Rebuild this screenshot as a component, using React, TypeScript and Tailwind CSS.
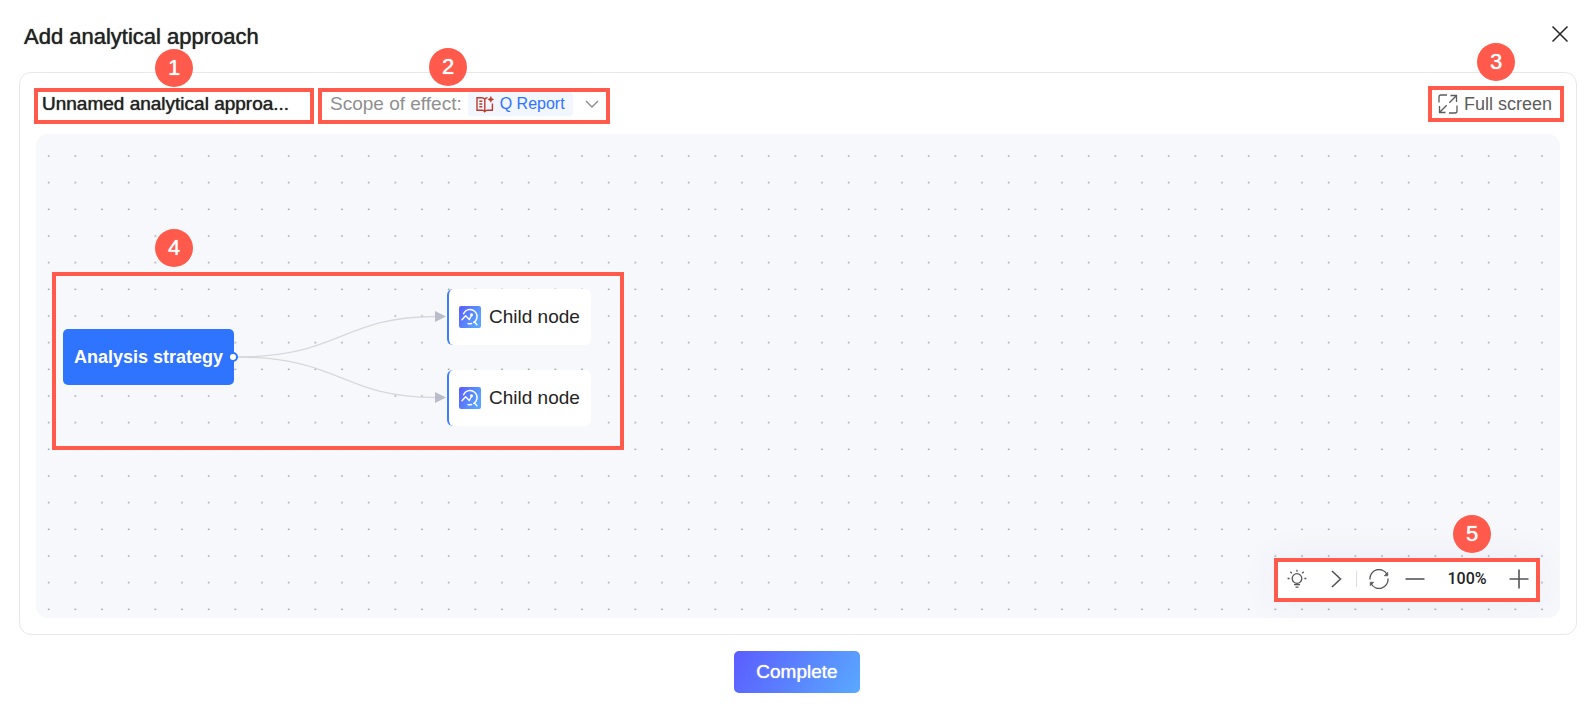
import React from 'react';
import { clsx } from 'clsx';

interface CalloutProps {
  step: number;
  className?: string;
  badgeClassName: string;
  children?: React.ReactNode;
}

// Red outline with a numbered badge sitting above it
const Callout: React.FC<CalloutProps> = ({ step, className, badgeClassName, children }) => {
  return (
    <div className={clsx('relative flex items-center border-4 border-[#ff5a4b]', className)}>
      {children}
      <span
        className={clsx(
          'absolute flex size-[38px] items-center justify-center rounded-full bg-[#ff5a4b] text-[22px] leading-none text-white [text-shadow:0_0_1px_currentColor]',
          badgeClassName,
        )}
      >
        {step}
      </span>
    </div>
  );
};

const CloseIcon = () => (
  <svg width="16" height="16" viewBox="0 0 16 16" fill="none" stroke="currentColor" strokeWidth="1.5">
    <path d="M.5.5l15 15M15.5.5l-15 15" />
  </svg>
);

const ReportIcon = () => (
  <svg width="18" height="17" viewBox="0 0 18 17" fill="none" stroke="#c0392b" strokeWidth="1.4">
    <path d="M8.8 3.2C8 2.1 7 1.7 5.6 1.7H1v12.6h5.2c1.100 0 2 .5 2.600 1.400.6-.9 1.500-1.400 2.600-1.400h5V7.500M8.800 3.200v12.500M8.800 3.200C9.300 2.200 10 1.700 11.500 1.700M3.300 5.300h3M3.300 8h3M3.300 10.800h3" />
    <path d="M14.800.5l.9 2 2 .9-2 .9-.9 2-.9-2-2-.9 2-.9z" fill="#c0392b" strokeWidth=".6" />
  </svg>
);

const ChevronDownIcon = () => (
  <svg width="14" height="9" viewBox="0 0 14 9" fill="none" stroke="#8c8c8c" strokeWidth="1.4">
    <path d="M1 1l6 6 6-6" />
  </svg>
);

const FullScreenIcon = () => (
  <svg width="20" height="20" viewBox="0 0 20 20" fill="none" stroke="currentColor" strokeWidth="1.3">
    <path d="M9 1H3a2 2 0 0 0-2 2v5.500M11 19h6a2 2 0 0 0 2-2v-5.500" />
    <path d="M12.500 1.500h6V8M18.300 1.700l-7 7M7.500 18.500h-6V12M1.700 18.300l7-7" />
  </svg>
);

const BulbIcon = () => (
  <svg width="20" height="20" viewBox="0 0 20 20" fill="none" stroke="currentColor" strokeWidth="1.3">
    <circle cx="10" cy="9.500" r="4.800" />
    <path d="M7 15.700h6M8.500 18.200h3" />
    <path d="M10 .8v2M3.300 2.800l1.500 1.500M16.700 2.800l-1.500 1.500M.6 9.500h2M17.400 9.500h2" />
  </svg>
);

const ChevronRightIcon = () => (
  <svg width="11" height="18" viewBox="0 0 11 18" fill="none" stroke="currentColor" strokeWidth="1.6">
    <path d="M1 1l8.500 8L1 17" />
  </svg>
);

const RefreshIcon = () => (
  <svg width="20" height="20" viewBox="0 0 20 20" fill="none" stroke="currentColor" strokeWidth="1.3">
    <path d="M18 5.500A9 9 0 0 0 1 10.500M2 14.500a9 9 0 0 0 17-5" />
    <path d="M18.800 3.200v3.600h-3.600zM1.200 16.800v-3.600h3.600z" fill="currentColor" strokeWidth=".6" />
  </svg>
);

const MinusIcon = () => (
  <svg width="20" height="20" viewBox="0 0 20 20" stroke="currentColor" strokeWidth="1.6">
    <path d="M.5 10h19" />
  </svg>
);

const PlusIcon = () => (
  <svg width="20" height="20" viewBox="0 0 20 20" stroke="currentColor" strokeWidth="1.6">
    <path d="M.5 10h19M10 .5v19" />
  </svg>
);

const AnalysisIcon = () => (
  <svg width="22" height="22" viewBox="0 0 22 22" fill="none">
    <defs>
      <linearGradient id="analysis-fill" x1="0" y1="0" x2="1" y2=".5">
        <stop offset="0" stopColor="#5b5cff" />
        <stop offset="1" stopColor="#59a4ff" />
      </linearGradient>
    </defs>
    <rect width="22" height="22" rx="2" fill="url(#analysis-fill)" />
    <g stroke="#fff" strokeWidth="1.4" strokeLinecap="round" strokeLinejoin="round">
      <path d="M4.600 7.800a7 7 0 1 1 10 8.700M9 17.600a7 7 0 0 0 3.600-.1M15.300 15.800l2.600 2.900" />
      <path d="M3 13.800l3.600-4 3.700 3.700 2.500-4.700" />
      <circle cx="12.500" cy="8.800" r=".8" fill="#fff" />
    </g>
  </svg>
);

const DotGrid = () => (
  <svg className="absolute inset-0 size-full" aria-hidden="true">
    <defs>
      <pattern id="dots" width="20" height="20" patternUnits="userSpaceOnUse" patternTransform="scale(1.33333)">
        <rect x="9" y="16" width="1" height="1" fill="#85878c" />
      </pattern>
    </defs>
    <rect width="100%" height="100%" fill="url(#dots)" />
  </svg>
);

const Edges = () => (
  <svg className="absolute top-0 left-0" width="600" height="400" fill="none" aria-hidden="true">
    <g stroke="#d6d8de" strokeWidth="1.3">
      <path d="M201 223C305 223 305 182.500 400 182.500" />
      <path d="M201 223C305 223 305 263.500 400 263.500" />
    </g>
    <g fill="#b9bccb">
      <path d="M399 177l11 5.500-11 5.500zM399 258l11 5.500-11 5.500z" />
    </g>
  </svg>
);

const ChildNode: React.FC<{ className: string }> = ({ className }) => (
  <div
    className={clsx(
      'absolute left-[411px] flex h-14 w-[144px] items-center gap-2 rounded-md border-l-2 border-[#3d7eff] bg-white pl-[10px] text-[19px] whitespace-nowrap text-[#242424]',
      className,
    )}
  >
    <AnalysisIcon />
    Child node
  </div>
);

const ZoomToolbar = () => (
  <Callout
    step={5}
    className="h-11 w-[266px] bg-white pb-0.5 pl-[9px] text-[#555] shadow-[0_0_40px_rgba(60,70,110,0.06)]"
    badgeClassName="-top-[47px] right-[45px]"
  >
    <div className="flex items-center gap-6">
      <button type="button" aria-label="Tips"><BulbIcon /></button>
      <button type="button" aria-label="Expand"><ChevronRightIcon /></button>
    </div>
    <span className="mr-3 ml-[14px] h-4 w-px bg-[#dcdcdc]" />
    <button type="button" aria-label="Reset"><RefreshIcon /></button>
    <button type="button" aria-label="Zoom out" className="ml-4"><MinusIcon /></button>
    <span className="w-[84px] text-center font-['Roboto',sans-serif] text-base font-medium text-[#242424]">100%</span>
    <button type="button" aria-label="Zoom in"><PlusIcon /></button>
  </Callout>
);

export default function App() {
  return (
    <div className="flex min-h-screen flex-col bg-white font-['Liberation_Sans',Arial,sans-serif] text-[#242424]">
      <header className="flex h-[72px] items-center justify-between pr-6 pl-6">
        <h1 className="text-[22px] [text-shadow:0_0_1px_currentColor]">Add analytical approach</h1>
        <button type="button" aria-label="Close" className="mb-1 p-0.5">
          <CloseIcon />
        </button>
      </header>

      <main className="mr-[17px] ml-[19px] flex flex-1 flex-col rounded-xl border border-[#e8e8e8] pt-[13px] pb-4">
        <div className="flex h-[38px] items-end gap-1 pr-3 pl-[14px]">
          <Callout step={1} className="h-9 w-[280px] pb-1 pl-1" badgeClassName="-top-[43px] left-[117px]">
            <h2 className="text-[19px] leading-6 whitespace-nowrap [text-shadow:0_0_1px_currentColor]">
              Unnamed analytical approa...
            </h2>
          </Callout>
          <Callout step={2} className="h-9 w-[292px] pb-1 pl-2" badgeClassName="-top-[44px] left-[107px]">
            <button type="button" className="flex items-center text-[19px] whitespace-nowrap text-[#8f8f8f]">
              Scope of effect:
              <span className="ml-[6px] flex h-6 items-center gap-[6px] rounded bg-[#f2f6ff] px-2 text-base text-[#2f74ff]">
                <ReportIcon />
                Q Report
              </span>
              <span className="ml-3">
                <ChevronDownIcon />
              </span>
            </button>
          </Callout>
          <Callout
            step={3}
            className="ml-auto h-9 w-[136px] self-start pl-[6px]"
            badgeClassName="-top-[47px] left-[45px]"
          >
            <button type="button" className="flex items-center gap-[6px] text-lg whitespace-nowrap text-[#5c5c5c]">
              <FullScreenIcon />
              Full screen
            </button>
          </Callout>
        </div>

        {/* Canvas */}
        <section className="relative mx-4 mt-[10px] min-h-[400px] flex-1 overflow-hidden rounded-xl bg-[#f7f8fc]">
          <DotGrid />
          <Edges />
          <div className="absolute top-[195px] left-[27px] flex h-14 w-[171px] items-center rounded-[5px] bg-[#2f74ff] pl-[11px] text-lg font-bold whitespace-nowrap text-white">
            Analysis strategy
            <span className="absolute -right-1 size-[10px] rounded-full border-2 border-[#2f74ff] bg-white" />
          </div>
          <ChildNode className="top-[155px]" />
          <ChildNode className="top-[236px]" />
          <div className="absolute top-[138px] left-4">
            <Callout step={4} className="h-[178px] w-[572px]" badgeClassName="-top-[47px] left-[99px]" />
          </div>
          <div className="absolute right-5 bottom-4">
            <ZoomToolbar />
          </div>
        </section>
      </main>

      <footer className="flex justify-center pt-4 pb-[13px]">
        <button
          type="button"
          className="h-[42px] w-[126px] rounded-[5px] bg-linear-[120deg] from-[#5b5cff] to-[#59a9ff] text-[19px] text-white [text-shadow:0_0_1px_currentColor]"
        >
          Complete
        </button>
      </footer>
    </div>
  );
}
